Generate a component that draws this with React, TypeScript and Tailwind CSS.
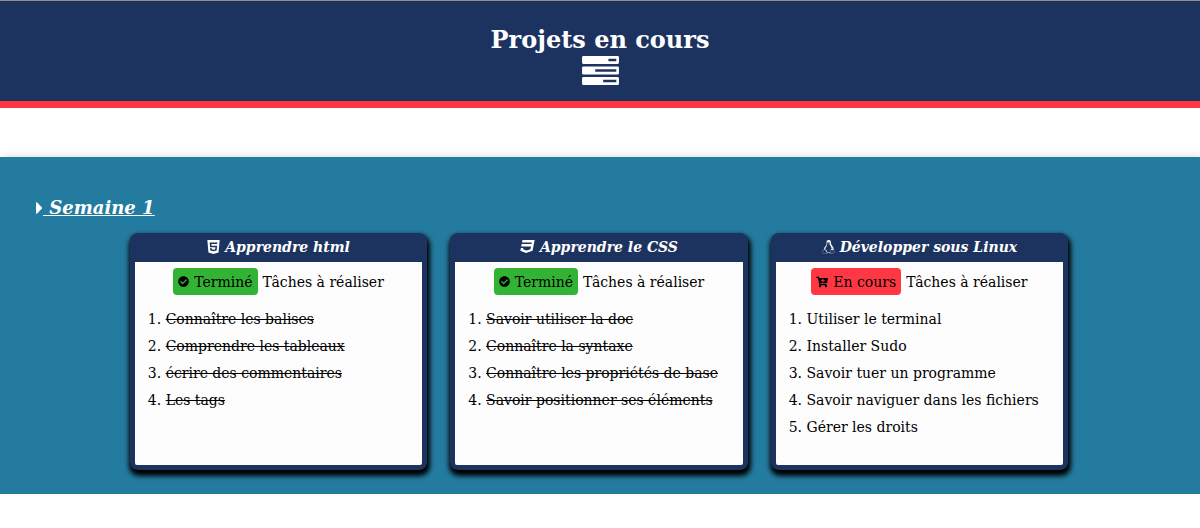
import type { ReactNode } from "react";
import { FaCaretRight, FaCartPlus, FaCheckCircle, FaLinux } from "react-icons/fa";

type Project = {
  title: string;
  icon: ReactNode;
  done: boolean;
  tasks: string[];
};

function Html5Icon() {
  return (
    <svg viewBox="192 128 1408 1600" className="h-[14px] w-[13px]" fill="currentColor" aria-hidden="true">
      <path d="M1322 597l16-175h-884l47 534h612l-22 228-197 53-196-53-13-140h-175l22 278 362 100h4v-1l359-99 50-544h-644l-15-181h674zm-1130-469h1408l-128 1438-578 162-574-162z" />
    </svg>
  );
}

function Css3Icon() {
  return (
    <svg viewBox="12 128 1768 1600" className="h-[13px] w-[15px]" fill="currentColor" aria-hidden="true">
      <path d="M275 128h1505l-266 1333-804 267-698-267 71-356h297l-29 147 422 161 486-161 68-339h-1208l58-297h1209l38-191h-1208z" />
    </svg>
  );
}

function TasksIcon() {
  return (
    <svg viewBox="0 0 1792 1408" className="h-[29px] w-[37px]" fill="currentColor" fillRule="evenodd" aria-hidden="true">
      <path d="M64 0H1728a64 64 0 0 1 64 64V320a64 64 0 0 1-64 64H64a64 64 0 0 1-64-64V64A64 64 0 0 1 64 0ZM1280 128V256H1664V128Z" />
      <path d="M64 512H1728a64 64 0 0 1 64 64V832a64 64 0 0 1-64 64H64a64 64 0 0 1-64-64V576A64 64 0 0 1 64 512ZM640 640V768H1664V640Z" />
      <path d="M64 1024H1728a64 64 0 0 1 64 64V1344a64 64 0 0 1-64 64H64a64 64 0 0 1-64-64V1088A64 64 0 0 1 64 1024ZM1024 1152V1280H1664V1152Z" />
    </svg>
  );
}

const projects: Project[] = [
  {
    title: "Apprendre html",
    icon: <Html5Icon />,
    done: true,
    tasks: ["Connaître les balises", "Comprendre les tableaux", "écrire des commentaires", "Les tags"],
  },
  {
    title: "Apprendre le CSS",
    icon: <Css3Icon />,
    done: true,
    tasks: [
      "Savoir utiliser la doc",
      "Connaître la syntaxe",
      "Connaître les propriétés de base",
      "Savoir positionner ses éléments",
    ],
  },
  {
    title: "Développer sous Linux",
    icon: <FaLinux className="h-[14px] w-[13px]" preserveAspectRatio="none" />,
    done: false,
    tasks: [
      "Utiliser le terminal",
      "Installer Sudo",
      "Savoir tuer un programme",
      "Savoir naviguer dans les fichiers",
      "Gérer les droits",
    ],
  },
];

function ProjectCard({ title, icon, done, tasks }: Project) {
  return (
    <article className="flex flex-col rounded-lg border-[5px] border-t-0 border-[#1d335f] bg-[#1d335f] shadow-[1px_4px_5px_2px_#000]">
      <h3 className="flex h-[29px] items-center justify-center gap-[5px] pb-0.5 text-sm font-bold text-white italic">
        {icon}
        {title}
      </h3>
      <div className="grow rounded-b-xs bg-[#fdfdfd] px-[13px] pt-[6px] pb-6">
        <p className="flex items-center justify-center gap-[5px]">
          <span
            className={
              done
                ? "flex h-[27px] items-center gap-[5px] rounded bg-[#33b333] px-[5px]"
                : "flex h-[27px] items-center gap-[5px] rounded bg-[#ff3742] px-[5px]"
            }
          >
            {done ? <FaCheckCircle className="size-[11px]" /> : <FaCartPlus className="size-3" />}
            {done ? "Terminé" : "En cours"}
          </span>
          Tâches à réaliser
        </p>
        <ol className="mt-[11px] list-inside list-decimal leading-[27px]">
          {tasks.map((task) => (
            <li key={task}>{done ? <s>{task}</s> : task}</li>
          ))}
        </ol>
      </div>
    </article>
  );
}

export default function App() {
  return (
    <div className="bg-white font-['DejaVu_Serif',serif] text-sm text-black">
      <header className="flex flex-col items-center border-t border-b-[7px] border-t-[#8f8f8f] border-b-[#ff3742] bg-[#1d335f] pt-[23px] pb-4 text-white">
        <h1 className="text-2xl leading-8 font-bold">Projets en cours</h1>
        <TasksIcon />
      </header>
      <main className="mt-[49px] bg-[#247ba0] pt-[39px] pr-[38px] pb-6 pl-9 shadow-[3px_2px_10px_rgba(0,0,0,0.25)]">
        <h2 className="flex items-center text-lg leading-6 font-bold text-white italic">
          <FaCaretRight className="h-5 w-[7px]" preserveAspectRatio="none" />
          <span className="whitespace-pre underline"> Semaine 1</span>
        </h2>
        <div className="mx-auto mt-[13px] grid w-5/6 grid-cols-3 gap-[23px]">
          {projects.map((project) => (
            <ProjectCard key={project.title} {...project} />
          ))}
        </div>
      </main>
    </div>
  );
}
